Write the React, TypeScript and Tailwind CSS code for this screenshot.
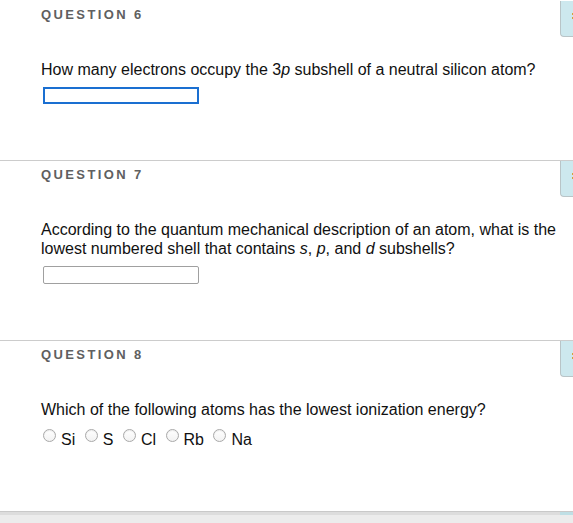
import React from "react";

function PointsTab() {
  return (
    <div className="absolute right-0 top-0 w-[13px] h-[36px] bg-[#cde8ee] border-l border-b border-[#b9c4c7] rounded-bl-[4px]">
      <span className="absolute left-[11px] top-[12px] w-[2px] h-[2px] bg-[#d6a13a]" />
      <span className="absolute left-[11px] top-[16px] w-[2px] h-[2px] bg-[#d6a13a]" />
    </div>
  );
}

function Heading({ n }: { n: number }) {
  return (
    <div className="text-[13px] leading-[16px] font-bold tracking-[2.4px] text-[#606060]">
      QUESTION {n}
    </div>
  );
}

function Radio({ label }: { label: string }) {
  return (
    <div className="flex items-start">
      <span className="mt-[-1px] w-[13px] h-[13px] rounded-full border border-[#a9a9a9] bg-gradient-to-b from-[#ffffff] to-[#f2f2f2] shadow-[inset_0_1px_1px_rgba(0,0,0,0.08)]" />
      <span className="ml-[5px] text-[16px] leading-[19px] text-[#111]">{label}</span>
    </div>
  );
}

export default function App() {
  return (
    <div
      className="w-[573px] h-[523px] bg-white overflow-hidden flex flex-col"
      style={{ fontFamily: '"Liberation Sans", Arial, Helvetica, sans-serif' }}
    >
      {/* Question 6 */}
      <section className="relative border-t border-transparent pt-[6px] pl-[41px] pb-[56px]">
        <PointsTab />
        <Heading n={6} />
        <p className="mt-[37px] text-[16px] leading-[19px] text-[#111]">
          How many electrons occupy the 3<i>p</i> subshell of a neutral silicon atom?
        </p>
        <div className="mt-[8px] ml-[2px] w-[156px] h-[17px] border-2 border-[#1a6fd1]" />
      </section>

      {/* Question 7 */}
      <section className="relative border-t border-[#cccccc] pt-[6px] pl-[41px] pb-[56px]">
        <PointsTab />
        <Heading n={7} />
        <p className="mt-[37px] text-[16px] leading-[19px] text-[#111] pr-[14px]">
          According to the quantum mechanical description of an atom, what is the
          <br />
          lowest numbered shell that contains <i>s</i>, <i>p</i>, and <i>d</i> subshells?
        </p>
        <div className="mt-[8px] ml-[2px] w-[156px] h-[18px] border border-[#a0a0a0] rounded-[2px]" />
      </section>

      {/* Question 8 */}
      <section className="relative flex-1 border-t border-[#cccccc] pt-[6px] pl-[41px]">
        <PointsTab />
        <Heading n={8} />
        <p className="mt-[37px] text-[16px] leading-[19px] text-[#111]">
          Which of the following atoms has the lowest ionization energy?
        </p>
        <div className="mt-[11px] ml-[2px] flex gap-[9.5px]">
          <Radio label="Si" />
          <Radio label="S" />
          <Radio label="Cl" />
          <Radio label="Rb" />
          <Radio label="Na" />
        </div>
      </section>

      {/* Bottom bar */}
      <div className="h-px bg-[#c9c9c9] shrink-0" />
      <div className="h-[3px] flex shrink-0">
        <div className="flex-1 bg-[#dddddd]" />
        <div className="w-[13px] bg-[#bfdfe5]" />
      </div>
      <div className="h-[8px] bg-[#ececec] shrink-0" />
    </div>
  );
}
